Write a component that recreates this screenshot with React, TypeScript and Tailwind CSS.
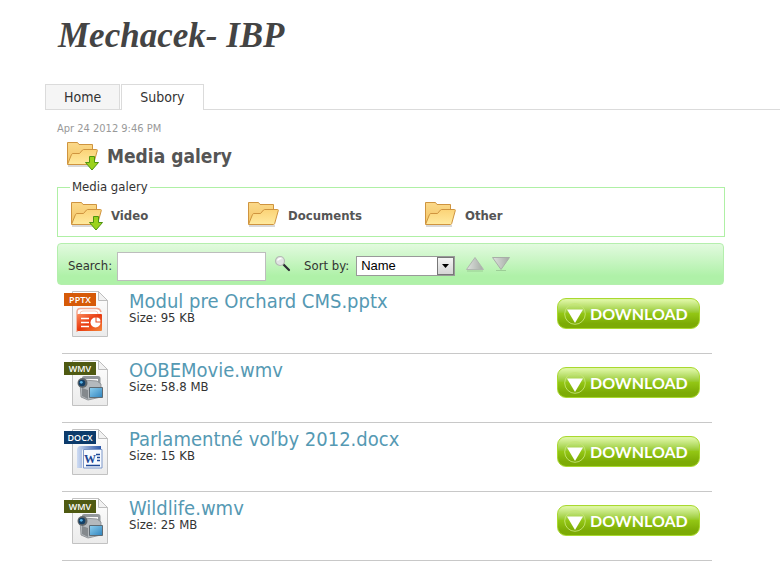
import { useState } from 'react';

type FileKind = 'pptx' | 'wmv' | 'docx';

interface MediaFile {
  id: number;
  name: string;
  size: string;
  kind: FileKind;
}

const files: MediaFile[] = [
  { id: 1, name: 'Modul pre Orchard CMS.pptx', size: '95 KB', kind: 'pptx' },
  { id: 2, name: 'OOBEMovie.wmv', size: '58.8 MB', kind: 'wmv' },
  { id: 3, name: 'Parlamentné voľby 2012.docx', size: '15 KB', kind: 'docx' },
  { id: 4, name: 'Wildlife.wmv', size: '25 MB', kind: 'wmv' },
];

const folders = [
  { name: 'Video', active: true },
  { name: 'Documents', active: false },
  { name: 'Other', active: false },
];

const labelColors: Record<FileKind, string> = {
  pptx: '#d65a08',
  wmv: '#4f5a12',
  docx: '#0d3b6b',
};

// Gradients shared by all the icons on the page
const IconDefs = () => (
  <svg className="absolute h-0 w-0" aria-hidden="true">
    <defs>
      <linearGradient id="folderBack" x1="0" y1="0" x2="0" y2="1">
        <stop offset="0" stopColor="#fbd98a" />
        <stop offset="1" stopColor="#f3c463" />
      </linearGradient>
      <linearGradient id="folderFront" x1="0" y1="0" x2="0" y2="1">
        <stop offset="0" stopColor="#fbd377" />
        <stop offset="1" stopColor="#ffea9f" />
      </linearGradient>
      <linearGradient id="page" x1="0" y1="0" x2="0" y2="1">
        <stop offset="0" stopColor="#ffffff" />
        <stop offset="1" stopColor="#ebebeb" />
      </linearGradient>
      <linearGradient id="ppt" x1="0" y1="0" x2="1" y2="1">
        <stop offset="0" stopColor="#fb8a5c" />
        <stop offset="0.5" stopColor="#e8380d" />
        <stop offset="1" stopColor="#f5883c" />
      </linearGradient>
      <linearGradient id="word" x1="0" y1="0" x2="1" y2="0">
        <stop offset="0" stopColor="#cfdcf3" />
        <stop offset="1" stopColor="#2a56a8" />
      </linearGradient>
      <linearGradient id="screen" x1="0" y1="0" x2="1" y2="1">
        <stop offset="0" stopColor="#8fd0f0" />
        <stop offset="1" stopColor="#2f83bd" />
      </linearGradient>
      <linearGradient id="silver" x1="0" y1="0" x2="1" y2="0">
        <stop offset="0" stopColor="#dfe2df" />
        <stop offset="1" stopColor="#a4aba4" />
      </linearGradient>
    </defs>
  </svg>
);

const FolderIcon = ({ download = false }: { download?: boolean }) => (
  <svg width="34" height="30" viewBox="0 0 34 30" className="shrink-0" aria-hidden="true">
    <path d="M1 25h26" stroke="#000" strokeOpacity="0.15" strokeWidth="2" />
    <path d="M0.500 23V1.500H10.500L12 3.500H25.500V22" fill="url(#folderBack)" stroke="#cf943f" />
    <path
      d="M0.500 23.500L4.500 13.500q.5-1 1.500-1h6.500l3-3.500q.5-.5 1.200-.5H29.500q1 0 .8 1L26.700 22.500q-.3 1-1.200 1z"
      fill="url(#folderFront)"
      stroke="#cf943f"
    />
    {download && (
      <path
        d="M22.500 15.500h5v6h4L25 29l-6.500-7.500h4z"
        fill="#9bd21c"
        stroke="#4f9410"
        strokeLinejoin="round"
      />
    )}
  </svg>
);

const PptxArt = () => (
  <g>
    <path d="M13 42V22q0-3.500 3.500-3.500H33q3 0 4 3.500" fill="#fff" stroke="#f2a890" strokeWidth="1.500" />
    <path d="M16 24q0-3 3-3h12q3 0 3 3" fill="none" stroke="#f7cbbc" />
    <rect x="13" y="24" width="25" height="17" rx="1" fill="url(#ppt)" />
    <path d="M17 28.500h8M17 32.500h8M17 36.500h8" stroke="#fff" strokeWidth="1.500" />
    <circle cx="31.500" cy="32.500" r="5" fill="#fff" />
    <path d="M31.500 32.500v-6h6v6z" fill="#e8481c" />
    <path d="M32.500 31.500v-4a4 4 0 0 1 4 4z" fill="#fff" />
  </g>
);

const WmvArt = () => (
  <g>
    <path d="M18 21v-2.500q0-1.500 2-1.500h14q2.500 0 2.500 2.500V25h-2.500v-5H20.500v2z" fill="#93989c" />
    <path d="M16 24l4-3 13 1 4 3v13l-13 3-7-3z" fill="#b4b9bd" stroke="#85898d" strokeWidth="0.800" />
    <path d="M18 29l6 2v9l-6-3z" fill="#84898d" />
    <circle cx="18.500" cy="24" r="5" fill="#62686c" />
    <circle cx="18" cy="24" r="3.300" fill="#123f66" />
    <circle cx="17.300" cy="23.300" r="1.400" fill="#58b2e6" />
    <path d="M25.500 28.500h13v10h-13z" fill="url(#screen)" stroke="#5f6b73" />
  </g>
);

const DocxArt = () => (
  <g>
    <path d="M13 40V22q0-4 4-4h20v3H20q-2 0-2 2v17z" fill="url(#word)" />
    <path d="M19.500 21.500h18.500v18.500H19.500z" fill="#f7faff" stroke="#7d98c9" />
    <text x="20" y="35" fontSize="12" fontWeight="700" fontFamily="Liberation Serif, serif" fill="#1d4794">
      W
    </text>
    <path d="M32 26.500h4M33 29.500h3M33 32.500h3M22 37.500h14" stroke="#1d4794" strokeWidth="1.500" />
  </g>
);

const FileIcon = ({ kind }: { kind: FileKind }) => (
  <svg width="46" height="48" viewBox="0 0 46 48" className="shrink-0" aria-hidden="true">
    <path d="M8.500 46.500V1.500H34.500L43.500 10.500V46.500z" fill="url(#page)" stroke="#c2c2c2" />
    <path d="M34.500 1.500v9h9z" fill="#f2f2f2" stroke="#bdbdbd" />
    {kind === 'pptx' && <PptxArt />}
    {kind === 'wmv' && <WmvArt />}
    {kind === 'docx' && <DocxArt />}
    <rect x="0" y="3" width="32" height="13" fill={labelColors[kind]} />
    <text
      x="16"
      y="13"
      fontSize="9"
      fontWeight="600"
      fontFamily="'Open Sans', sans-serif"
      fill="#fff"
      textAnchor="middle"
    >
      {kind.toUpperCase()}
    </text>
  </svg>
);

const SearchIcon = () => (
  <svg width="18" height="18" viewBox="0 0 18 18" aria-hidden="true">
    <path d="M9.500 9.500L15 15" stroke="#2d2d35" strokeWidth="2.200" strokeLinecap="round" />
    <circle cx="6" cy="6" r="4.500" fill="#e0e4e2" stroke="#b4b9b4" strokeWidth="1.200" />
    <path d="M3.500 5.500q1-2.500 4-2" stroke="#fff" strokeWidth="1.500" fill="none" />
  </svg>
);

const DownloadButton = ({ name }: { name: string }) => (
  <button
    type="button"
    aria-label={`DOWNLOAD ${name}`}
    className="flex h-[31px] w-[143px] shrink-0 items-center gap-1 rounded-[9px] border border-[#a9d92f] bg-linear-to-b from-[#dcf5a0] from-5% via-[#93c614] via-50% to-[#7cab05] to-85% pl-[6px]"
  >
    <svg width="22" height="22" viewBox="0 0 22 22" className="shrink-0" aria-hidden="true">
      <circle cx="11" cy="11" r="10.300" fill="none" stroke="#c5e573" strokeWidth="0.900" />
      <path d="M3 6.500h16L11 20z" fill="#fff" />
    </svg>
    <span className="font-['Lato',sans-serif] text-base leading-5 font-bold text-white">DOWNLOAD</span>
  </button>
);

const App = () => {
  const [search, setSearch] = useState('');
  const [sortBy, setSortBy] = useState('Name');

  return (
    <div className="bg-white pb-6 font-['DejaVu_Sans_Condensed','Noto_Sans',sans-serif] text-[13px] text-[#333]">
      <IconDefs />

      <header className="px-[58px] pt-3">
        <h1 className="font-['Liberation_Serif',serif] text-[35px] leading-12 font-bold text-[#444] italic">
          Mechacek- IBP
        </h1>
      </header>

      <nav className="mt-6 ml-[45px] flex gap-px border-b border-[#dbdbdb] text-sm">
        <a href="#home" className="h-[25px] border border-b-0 border-[#dbdbdb] bg-[#f5f5f5] px-[18px] leading-6">
          Home
        </a>
        <a
          href="#subory"
          className="-mb-px h-[26px] border border-b-0 border-[#dbdbdb] bg-white px-[18px] leading-6"
        >
          Subory
        </a>
      </nav>

      <main className="pr-[55px] pl-[57px]">
        <p className="pt-[11px] text-[11px] leading-4 text-[#999]">Apr 24 2012 9:46 PM</p>

        <div className="mt-1 flex items-center gap-[6px] pl-[10px]">
          <FolderIcon download />
          <h2 className="text-[19px] leading-6 font-bold text-[#555]">Media galery</h2>
        </div>

        <fieldset className="mt-2 border border-[#aff0a5] pb-[5px] pl-[13px]">
          <legend className="-ml-px px-[2px] leading-4">Media galery</legend>
          <div className="flex pt-[6px]">
            {folders.map(folder => (
              <a
                key={folder.name}
                href="#folder"
                className="flex w-[177px] items-center gap-[6px] font-bold text-[#555]"
              >
                <FolderIcon download={folder.active} />
                {folder.name}
              </a>
            ))}
          </div>
        </fieldset>

        <form
          className="mt-[6px] mr-px flex h-[42px] items-center rounded-[4px] border border-[#b4efad] bg-linear-to-b from-[#e2fadf] to-[#aff1a8] to-80% pl-[10px]"
          onSubmit={e => e.preventDefault()}
        >
          <label htmlFor="search" className="pt-1">
            Search:
          </label>
          <input
            id="search"
            type="text"
            value={search}
            onChange={e => setSearch(e.target.value)}
            className="mt-1 ml-[5px] h-[29px] w-[149px] border border-[#bdbdbd] bg-white px-2"
          />
          <button type="submit" aria-label="Search" className="ml-2">
            <SearchIcon />
          </button>
          <label htmlFor="sort" className="ml-3 pt-1">
            Sort by:
          </label>
          <div className="relative mt-1 ml-[7px]">
            <select
              id="sort"
              value={sortBy}
              onChange={e => setSortBy(e.target.value)}
              className="block h-5 w-[99px] appearance-none border border-[#999] bg-white pl-1 font-['Liberation_Sans',sans-serif] text-[13px] leading-4 text-black"
            >
              <option>Name</option>
              <option>Size</option>
            </select>
            <span className="pointer-events-none absolute top-px right-px flex h-[18px] w-[17px] items-center justify-center border border-[#777] bg-linear-to-b from-[#f5f5f5] to-[#d5d5d5]">
              <svg width="7" height="4" viewBox="0 0 7 4" aria-hidden="true">
                <path d="M0 0h7L3.500 4z" fill="#000" />
              </svg>
            </span>
          </div>
          <button type="button" aria-label="Sort ascending" className="ml-[10px]">
            <svg width="20" height="16" viewBox="0 0 20 16" aria-hidden="true">
              <path d="M2 15h16" stroke="#000" strokeOpacity="0.15" />
              <path d="M10 1.500L18.500 13.500h-17z" fill="url(#silver)" stroke="#b0b6b0" />
            </svg>
          </button>
          <button type="button" aria-label="Sort descending" className="ml-[6px]">
            <svg width="20" height="16" viewBox="0 0 20 16" aria-hidden="true">
              <path d="M5 14.500h10" stroke="#000" strokeOpacity="0.15" />
              <path d="M1.500 1.500h17L10 13.500z" fill="url(#silver)" stroke="#a8aea8" />
            </svg>
          </button>
        </form>

        <ul className="mr-[13px] ml-[5px]">
          {files.map(file => (
            <li key={file.id} className="flex h-[69px] items-start border-b border-[#c8c8c8] pr-3 pl-[2px]">
              <div className="pt-[5px]">
                <FileIcon kind={file.kind} />
              </div>
              <div className="grow pt-[5px] pl-[19px]">
                <a href="#file" className="block text-xl leading-[22px] text-[#5599b3]">
                  {file.name}
                </a>
                <p className="leading-3">Size: {file.size}</p>
              </div>
              <div className="pt-[13px]">
                <DownloadButton name={file.name} />
              </div>
            </li>
          ))}
        </ul>
      </main>
    </div>
  );
};

export default App;
